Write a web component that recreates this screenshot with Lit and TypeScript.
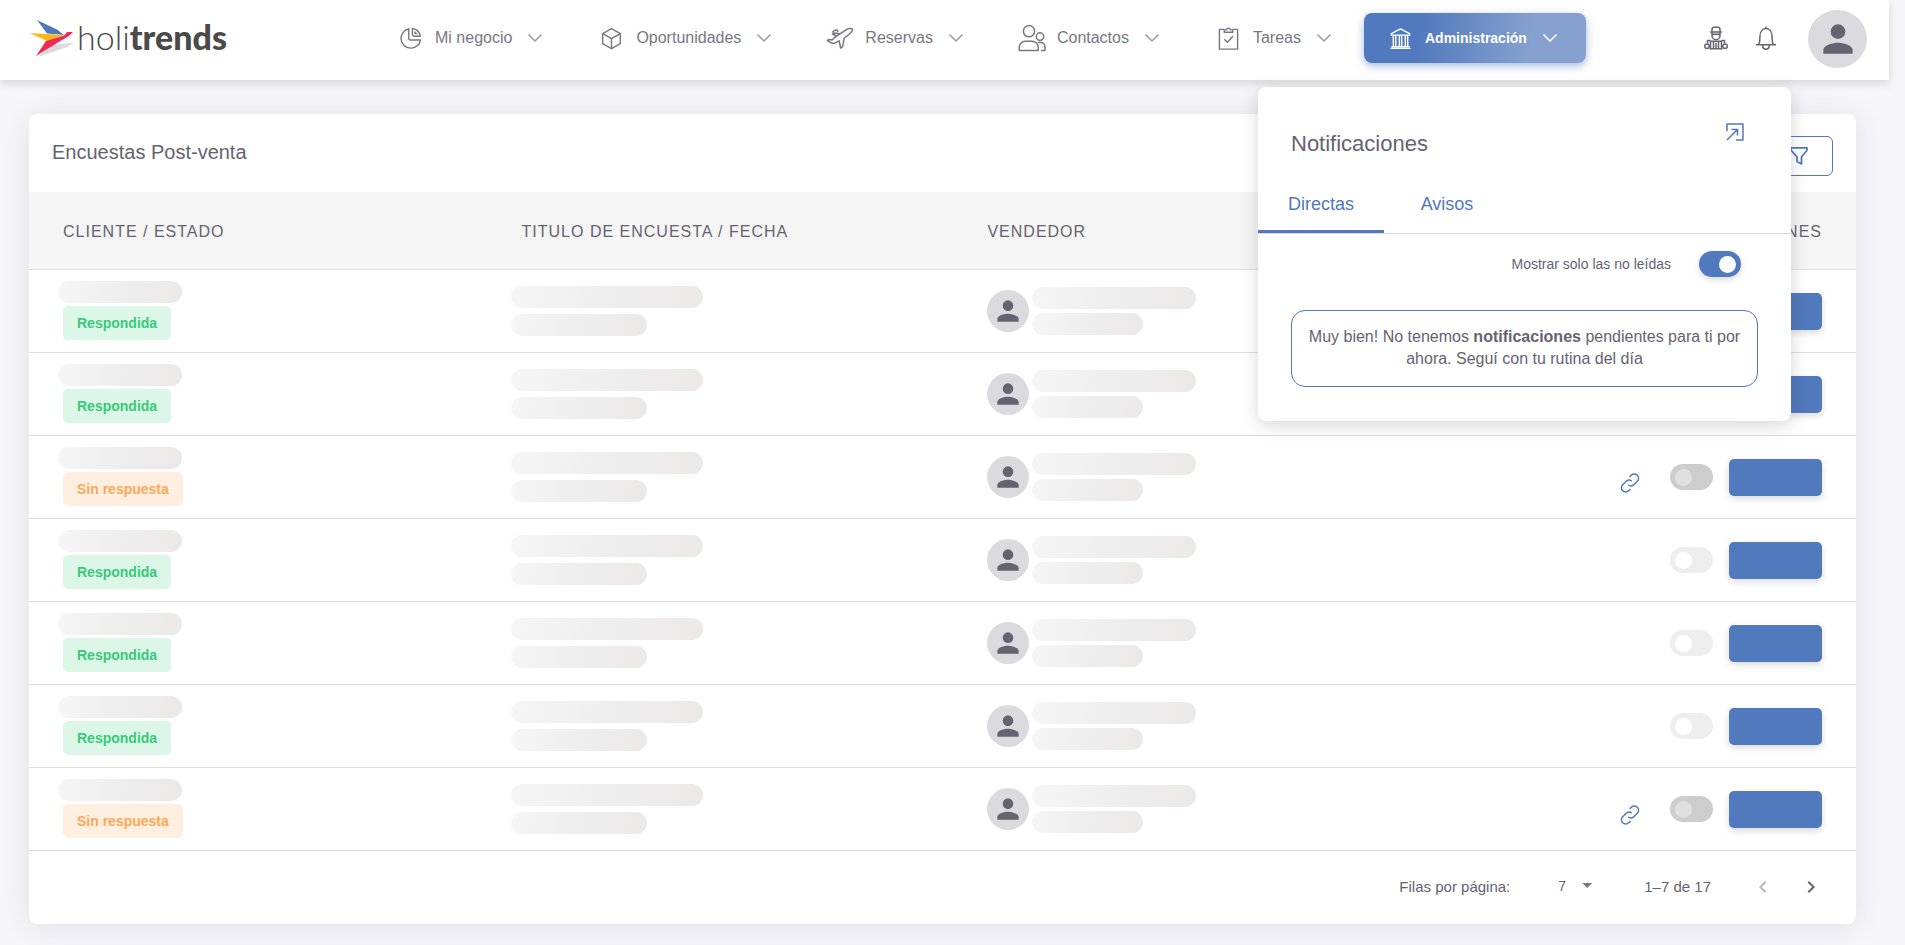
import { LitElement, html, css, svg } from "lit";
import { customElement, property } from "lit/decorators.js";

const icons: Record<string, { box: string; body: unknown }> = {
  pie: {
    box: "0 0 24 24",
    body: svg`<path d="M10.200 1.900A10.200 10.200 0 1 0 22.400 13.600H12.400a2.200 2.200 0 0 1-2.200-2.200Z"/><path d="M14 1.600v6a2 2 0 0 0 2 2h6.200A9.600 9.600 0 0 0 14 1.600Z"/><path d="M16.800 4.800v2h2.200"/>`,
  },
  box: {
    box: "0 0 24 24",
    body: svg`<path d="M12 1.800 21.200 7v10.400L12 22.600 2.800 17.400V7Z"/><path d="M2.800 7 12 12.200 21.200 7M12 12.200v10.400"/>`,
  },
  plane: {
    box: "0 0 28 24",
    body: svg`<path d="M9 11.200 20 3.800c2-1.300 5.200-1.700 6.200-.900.700.900-.300 2.800-2 4.300l-5.900 5-1.800 8.600-1.900 1.200-1.400-7.200-4.600 2.400-2.800 0-4.500-2.600 1.300-1.100 3.800.300Z"/><path d="m14.200 7.700-6.200-.7-1.500 1 4 2M6.200 6.400l3-2.400 2.200.2.600 1.800"/>`,
  },
  people: {
    box: "0 0 28 28",
    body: svg`<circle cx="11" cy="7.200" r="5.600"/><circle cx="22" cy="12.600" r="3.800"/><path d="M1.300 26.500v-3.200a6 6 0 0 1 6-6h6.900a6 6 0 0 1 6 6v3.200ZM19.800 18.600h2.900a4.300 4.300 0 0 1 4.300 4.300v3.600h-4"/>`,
  },
  tasks: {
    box: "0 0 22 24",
    body: svg`<path d="M6.500 2.500H1.500v20.600h19V2.500h-5"/><path d="M6.500 5.500V3h2.300a2.300 2.300 0 0 1 4.400 0h2.300v2.500Z"/><path d="m6.600 12.800 3.200 3.200 5.800-6.400"/>`,
  },
  bank: {
    box: "0 0 24 24",
    body: svg`<path d="M2.500 8.500v-1.600L12 2l9.500 4.900v1.600ZM4.500 8.500v12.300M7 8.500v12.300M10.800 8.500v12.300M13.200 8.500v12.300M17 8.500v12.300M19.500 8.500v12.300M1.500 22.300h21M2.500 20.700h19"/>`,
  },
  chevron: { box: "0 0 16 16", body: svg`<path d="m1.500 4.500 6.500 6.500 6.500-6.500"/>` },
  support: {
    box: "0 0 24 24",
    body: svg`<path d="M8 5.800V3.200a2 2 0 0 1 2-1.900h4a2 2 0 0 1 2 1.900v2.600M6.200 6h11.600M8 6.500v3.200a4 4 0 0 0 8 0V6.500M8 8.200h8"/><path d="M6.500 22.700v-7.400h11v7.400M9.500 15.300v7.400M12 17v5.700M14.500 15.300v7.400M3.500 17.500v-3h3M20.500 17.500v-3h-3M5.500 22.700h13"/><circle cx="3" cy="20.300" r="2.200"/><circle cx="21" cy="20.300" r="2.200"/>`,
  },
  bell: {
    box: "0 0 24 24",
    body: svg`<path d="M12 .6v2M2 18.800h20M4.600 18.600c1-1.500 1.300-3.500 1.300-7.600 0-5.200 2.500-8.400 6.100-8.400s6.100 3.200 6.100 8.400c0 4.100.3 6.100 1.300 7.600M8.800 19v1a3.200 3.200 0 0 0 6.400 0v-1"/>`,
  },
  person: {
    box: "0 0 24 24",
    body: svg`<path fill="currentColor" stroke="none" d="M12 12a4 4 0 1 0 0-8 4 4 0 0 0 0 8Zm0 2c-2.670 0-8 1.340-8 4v2h16v-2c0-2.660-5.330-4-8-4Z"/>`,
  },
  open: { box: "1 1 18 18", body: svg`<path d="M2 9V2h16v16h-7M2 18l10-10M6.500 7.500h6v6"/>` },
  filter: { box: "0 0 20 20", body: svg`<path stroke-width="1.800" d="M2 1.800h16v2.400l-5.500 6.800v7l-4.500-2.500V11L2 4.200Z"/>` },
  link: {
    box: "0 0 20 20",
    body: svg`<path d="M8.300 11.800a4 4 0 0 0 5 .4l4-4a4.200 4.200 0 0 0-6-6L9.600 3.900"/><path d="M11.700 8.200a4 4 0 0 0-5-.4l-4 4a4.200 4.200 0 0 0 6 6l1.700-1.700"/>`,
  },
  prev: {
    box: "0 0 24 24",
    body: svg`<path fill="currentColor" stroke="none" d="M15.410 7.410 14 6l-6 6 6 6 1.410-1.410L10.830 12Z"/>`,
  },
  next: {
    box: "0 0 24 24",
    body: svg`<path fill="currentColor" stroke="none" d="M10 6 8.590 7.410 13.170 12l-4.580 4.590L10 18l6-6Z"/>`,
  },
};

@customElement("ui-icon")
export class UiIcon extends LitElement {
  @property() name = "pie";
  static styles = css`
    :host { display: inline-block; width: 24px; height: 24px; flex: none; }
    svg { display: block; width: 100%; height: 100%; overflow: visible; }
  `;
  render() {
    const icon = icons[this.name];
    return html`<svg viewBox=${icon.box} fill="none" stroke="currentColor" stroke-width="1.5"
      stroke-linejoin="round" aria-hidden="true">${icon.body}</svg>`;
  }
}

interface Survey { answered: boolean; }

const menu = [
  { label: "Mi negocio", icon: "pie" },
  { label: "Oportunidades", icon: "box" },
  { label: "Reservas", icon: "plane" },
  { label: "Contactos", icon: "people" },
  { label: "Tareas", icon: "tasks" },
  { label: "Administración", icon: "bank", active: true },
];

const surveys: Survey[] = [true, true, false, true, true, true, false].map((answered) => ({ answered }));

@customElement("app-root")
export class AppRoot extends LitElement {
  static styles = css`
    :host {
      --primary: #5179bd;
      --text: #666370;
      --muted: #7a7782;
      display: block;
      box-sizing: border-box;
      min-height: 100vh;
      padding-right: 16px;
      background: #f7f7fa;
      color: var(--text);
      font-family: "Liberation Sans", Arial, sans-serif;
      font-size: 15px;
    }
    *, *::before { box-sizing: border-box; }
    button, select, input { font: inherit; color: inherit; margin: 0; }
    button { border: 0; padding: 0; background: none; cursor: pointer; }

    .bar {
      position: relative;
      z-index: 1;
      display: flex;
      align-items: center;
      height: 80px;
      padding: 0 22px 4px 29px;
      background: #fff;
      box-shadow: 0 3px 9px rgba(58, 53, 65, 0.18);
    }
    .brand { display: flex; align-items: center; width: 345px; text-decoration: none; color: #4a4a49; }
    .bird { width: 46px; height: 38px; margin-right: 2px; }
    .word { font-family: Lato, sans-serif; font-weight: 300; font-size: 34px; line-height: 40px; padding-bottom: 2px; }
    .word b { font-weight: 900; }
    .menu { display: flex; gap: 4px; }
    .entry {
      display: flex;
      align-items: center;
      height: 50px;
      padding: 0 28px 0 25px;
      border-radius: 8px;
      font-size: 16px;
      color: var(--muted);
      white-space: nowrap;
    }
    .entry .glyph { width: 23px; height: 23px; margin-right: 13px; }
    .entry .glyph.wide { width: 28px; height: 28px; margin: 0 11px 0 -3px; }
    .entry .arrow { width: 16px; height: 16px; margin-left: 15px; opacity: 0.75; }
    .entry.active {
      background: linear-gradient(98deg, var(--primary) 25%, #86a1d0 75%);
      box-shadow: 0 3px 8px rgba(81, 121, 189, 0.5);
      color: #fff;
      font-size: 14px;
      font-weight: 700;
    }
    .entry.active .arrow { opacity: 1; }
    .tools { display: flex; align-items: center; margin-left: auto; gap: 26px; color: var(--text); }
    .tool { display: flex; }
    .face {
      display: flex;
      align-items: center;
      justify-content: center;
      flex: none;
      border-radius: 50%;
      background: #dbdadf;
      color: var(--text);
    }
    .face.big { width: 59px; height: 58px; margin: 2px 0 0 4px; }
    .face.big ui-icon { width: 46px; height: 44px; }
    .face.small { width: 42px; height: 42px; }
    .face.small ui-icon { width: 32px; height: 32px; }

    .main { padding: 34px 33px 21px 29px; }
    .card {
      border-radius: 8px;
      background: #fff;
      box-shadow: 0 3px 32px rgba(58, 53, 65, 0.12);
    }
    .head { display: flex; justify-content: space-between; align-items: center; height: 78px; padding: 6px 23px 0; }
    .title { margin: 0; padding-bottom: 8px; font-size: 20px; font-weight: 400; line-height: 24px; }
    .filter {
      display: flex;
      align-items: center;
      justify-content: center;
      width: 68px;
      height: 40px;
      border: 1px solid var(--primary);
      border-radius: 6px;
      color: var(--primary);
    }
    .filter ui-icon { width: 20px; height: 20px; }

    .grid { width: 100%; border-collapse: separate; border-spacing: 0; table-layout: fixed; }
    .grid th {
      height: 78px;
      padding: 2px 34px 0;
      background: #f5f5f5;
      border-bottom: 1px solid #e0e0e1;
      font-size: 16px;
      font-weight: 400;
      letter-spacing: 1px;
      text-align: left;
      white-space: nowrap;
    }
    .grid td { height: 83px; padding: 0 34px; border-bottom: 1px solid #dddddf; }
    .c1 { width: 25.1%; }
    .c2 { width: 25.5%; }
    .c3 { width: 24.4%; }
    .grid .end { text-align: right; }
    .stack { display: flex; flex-direction: column; align-items: flex-start; }
    .client { gap: 3px; padding-bottom: 1px; }
    .survey { gap: 6px; margin-left: -11px; padding-bottom: 1px; }
    .seller { display: flex; align-items: center; gap: 3px; }
    .seller .stack { gap: 4px; }
    .bone { height: 22px; border-radius: 11px; background: linear-gradient(98deg, #f6f6f6, #efeeef 50%, #ebe9e8); }
    .w124 { width: 124px; margin-left: -5px; }
    .w192 { width: 192px; }
    .w136 { width: 136px; }
    .w164 { width: 164px; }
    .w111 { width: 111px; }
    .badge {
      padding: 0 14px;
      border-radius: 5px;
      font-size: 14px;
      font-weight: 700;
      line-height: 34px;
      background: #dcf6e8;
      color: #37ca78;
    }
    .badge.pending { background: #ffefe1; color: #fda856; }
    .actions { display: flex; justify-content: flex-end; align-items: center; gap: 16px; }
    .actions a { display: flex; padding-top: 12px; margin-right: 14px; color: var(--primary); }
    .actions a ui-icon { width: 20px; height: 20px; }
    .go { width: 93px; height: 37px; border-radius: 5px; background: var(--primary); box-shadow: 0 3px 7px rgba(58, 53, 65, 0.18); }

    .toggle {
      appearance: none;
      display: flex;
      align-items: center;
      width: 43px;
      height: 26px;
      padding: 0 5px;
      border-radius: 13px;
      background: #eee;
    }
    .toggle::before { content: ""; width: 17px; height: 17px; border-radius: 50%; background: #fff; }
    .toggle.off { background: #cdcdcd; }
    .toggle.off::before { background: #e0e0e0; }
    .toggle:checked { justify-content: flex-end; background: var(--primary); box-shadow: 0 3px 6px rgba(58, 53, 65, 0.18); }

    .foot { display: flex; align-items: center; justify-content: flex-end; height: 73px; padding: 0 21px 2px 29px; }
    .size { display: flex; align-items: center; margin: 0 52px 0 48px; padding-bottom: 2px; }
    .size select { appearance: none; border: 0; padding: 0; background: none; width: 24px; font-size: 14px; }
    .size .tri { width: 10px; height: 5px; background: var(--muted); clip-path: polygon(0 0, 100% 0, 50% 100%); }
    .pager { display: flex; margin-left: 28px; }
    .pager button { display: flex; padding: 12px; }
    .pager button:disabled { opacity: 0.45; }

    .popup {
      position: absolute;
      top: 87px;
      right: 98px;
      width: 533px;
      padding-bottom: 34px;
      border-radius: 8px;
      background: #fff;
      box-shadow: 0 4px 18px rgba(58, 53, 65, 0.2);
    }
    .top { display: flex; justify-content: space-between; align-items: flex-start; padding: 36px 47px 0 33px; height: 93px; }
    .top h2 { margin: 8px 0 0; font-size: 22px; font-weight: 400; line-height: 26px; }
    .top button { display: flex; color: var(--primary); }
    .top button ui-icon { width: 18px; height: 18px; }
    .tabs { display: flex; height: 54px; border-bottom: 1px solid #d9d8dc; }
    .tab { width: 126px; padding-bottom: 2px; font-size: 18px; color: var(--primary); border-bottom: 3px solid transparent; }
    .tab.on { border-bottom-color: var(--primary); }
    .only { display: flex; justify-content: flex-end; align-items: center; gap: 28px; padding: 17px 50px 0 0; font-size: 14px; }
    .only .toggle { width: 42px; }
    .note {
      margin: 33px 33px 0;
      padding: 15px 14px 16px;
      border: 1px solid var(--primary);
      border-radius: 14px;
      font-size: 16px;
      line-height: 22px;
      text-align: center;
    }
  `;

  render() {
    return html`
      <header class="bar">
        <a class="brand" href="#">
          <svg class="bird" viewBox="0 0 46 38" aria-hidden="true">
            <path fill="#d9dadc" d="M24 26 45 23.500 38 28 9 38Z" />
            <path fill="#4f79bd" d="M8 1 28 10.500 35 16 18 14.500Z" />
            <path fill="#fbb919" d="M1 14 35 16 18 22Z" />
            <path fill="#ee2a55" d="M7 37 17 22 35 16.500 38 13 44 13 40 17 33 21Z" />
          </svg>
          <span class="word">holi<b>trends</b></span>
        </a>
        <nav class="menu">
          ${menu.map(
            (m) => html`<button class="entry ${m.active ? "active" : ""}">
              <ui-icon class="glyph ${m.icon === "people" || m.icon === "plane" ? "wide" : ""}" name=${m.icon}></ui-icon>
              ${m.label}
              <ui-icon class="arrow" name="chevron"></ui-icon>
            </button>`
          )}
        </nav>
        <div class="tools">
          <button class="tool" aria-label="Soporte"><ui-icon name="support"></ui-icon></button>
          <button class="tool" aria-label="Notificaciones"><ui-icon name="bell"></ui-icon></button>
          <button class="face big" aria-label="Perfil"><ui-icon name="person"></ui-icon></button>
        </div>
        ${this.popup()}
      </header>
      <main class="main">
        <section class="card">
          <div class="head">
            <h1 class="title">Encuestas Post-venta</h1>
            <button class="filter" aria-label="Filtrar"><ui-icon name="filter"></ui-icon></button>
          </div>
          <table class="grid">
            <thead>
              <tr>
                <th class="c1">CLIENTE / ESTADO</th>
                <th class="c2">TITULO DE ENCUESTA / FECHA</th>
                <th class="c3">VENDEDOR</th>
                <th class="end">ACCIONES</th>
              </tr>
            </thead>
            <tbody>${surveys.map((s) => this.row(s))}</tbody>
          </table>
          <div class="foot">
            <label for="size">Filas por página:</label>
            <span class="size">
              <select id="size"><option>7</option><option>10</option></select>
              <span class="tri"></span>
            </span>
            <span>1–7 de 17</span>
            <span class="pager">
              <button disabled aria-label="Anterior"><ui-icon name="prev"></ui-icon></button>
              <button aria-label="Siguiente"><ui-icon name="next"></ui-icon></button>
            </span>
          </div>
        </section>
      </main>
    `;
  }

  private row(s: Survey) {
    return html`<tr>
      <td>
        <div class="stack client">
          <span class="bone w124"></span>
          <span class="badge ${s.answered ? "" : "pending"}">${s.answered ? "Respondida" : "Sin respuesta"}</span>
        </div>
      </td>
      <td>
        <div class="stack survey"><span class="bone w192"></span><span class="bone w136"></span></div>
      </td>
      <td>
        <div class="seller">
          <span class="face small"><ui-icon name="person"></ui-icon></span>
          <div class="stack"><span class="bone w164"></span><span class="bone w111"></span></div>
        </div>
      </td>
      <td>
        <div class="actions">
          ${s.answered ? "" : html`<a href="#" aria-label="Enlace"><ui-icon name="link"></ui-icon></a>`}
          <input class="toggle ${s.answered ? "" : "off"}" type="checkbox" aria-label="Activa" />
          <button class="go" aria-label="Ver encuesta"></button>
        </div>
      </td>
    </tr>`;
  }

  private popup() {
    return html`<section class="popup">
      <div class="top">
        <h2>Notificaciones</h2>
        <button aria-label="Abrir"><ui-icon name="open"></ui-icon></button>
      </div>
      <div class="tabs" role="tablist">
        <button class="tab on" role="tab" aria-selected="true">Directas</button>
        <button class="tab" role="tab" aria-selected="false">Avisos</button>
      </div>
      <div class="only">
        <label for="unread">Mostrar solo las no leídas</label>
        <input id="unread" class="toggle" type="checkbox" checked />
      </div>
      <p class="note">Muy bien! No tenemos <b>notificaciones</b> pendientes para ti por ahora. Seguí con tu rutina del día</p>
    </section>`;
  }
}
